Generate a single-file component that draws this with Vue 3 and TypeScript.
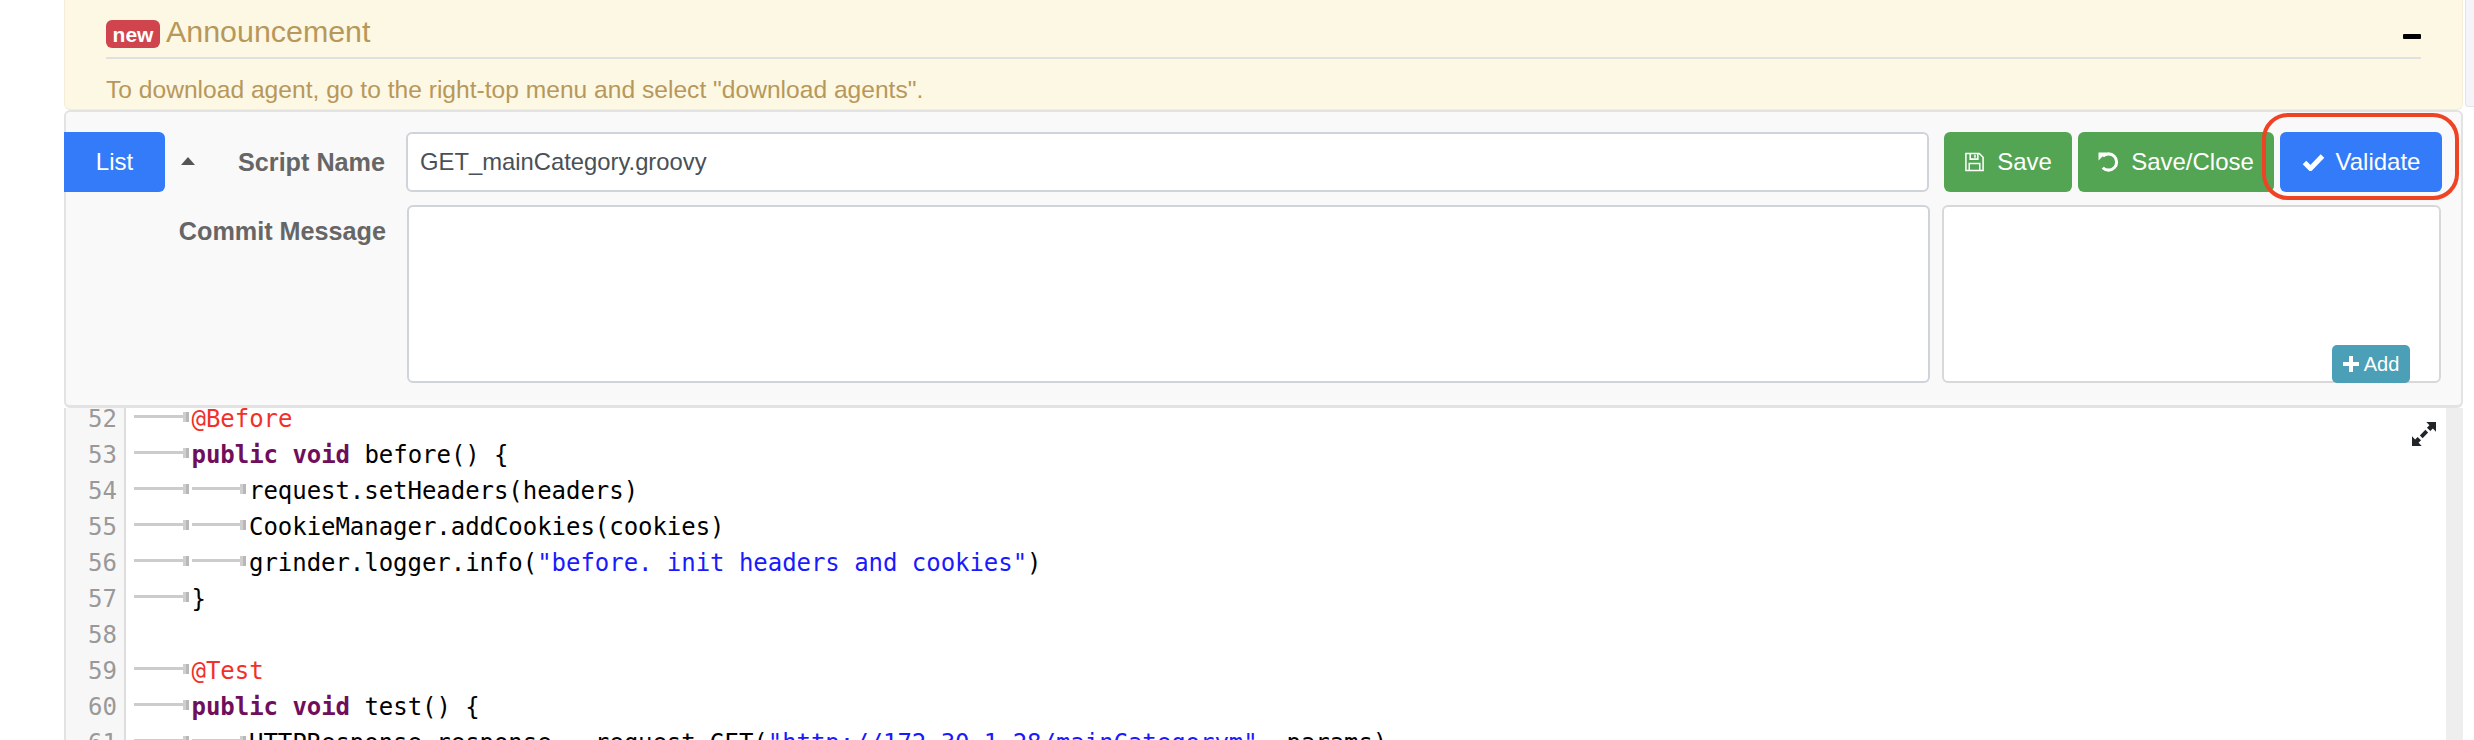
<script setup lang="ts">
type Tok = { t: string; c?: string }
interface Line { n: number; tabs: number; toks: Tok[] }
const lines: Line[] = [
  { n: 52, tabs: 1, toks: [{ t: '@Before', c: 'meta' }] },
  { n: 53, tabs: 1, toks: [{ t: 'public', c: 'kw' }, { t: ' ' }, { t: 'void', c: 'kw' }, { t: ' before() {' }] },
  { n: 54, tabs: 2, toks: [{ t: 'request.setHeaders(headers)' }] },
  { n: 55, tabs: 2, toks: [{ t: 'CookieManager.addCookies(cookies)' }] },
  { n: 56, tabs: 2, toks: [{ t: 'grinder.logger.info(' }, { t: '"before. init headers and cookies"', c: 'str' }, { t: ')' }] },
  { n: 57, tabs: 1, toks: [{ t: '}' }] },
  { n: 58, tabs: 0, toks: [] },
  { n: 59, tabs: 1, toks: [{ t: '@Test', c: 'meta' }] },
  { n: 60, tabs: 1, toks: [{ t: 'public', c: 'kw' }, { t: ' ' }, { t: 'void', c: 'kw' }, { t: ' test() {' }] },
  { n: 61, tabs: 2, toks: [{ t: 'HTTPResponse response = request.GET(' }, { t: '"http://172.30.1.28/mainCategorym"', c: 'str' }, { t: ', params)' }] },
]
</script>

<template>
  <div class="page">
    <div class="edge"></div>
    <section class="alert">
      <div class="alert-head">
        <span class="badge">new</span>
        <span class="alert-title">Announcement</span>
        <span class="minus"></span>
      </div>
      <p class="alert-msg">To download agent, go to the right-top menu and select "download agents".</p>
    </section>

    <section class="panel">
      <div class="row-top">
        <button class="btn blue list">List</button>
        <span class="caret"></span>
        <label class="lbl">Script Name</label>
        <div class="input">GET_mainCategory.groovy</div>
        <div class="actions">
          <button class="btn green save">
            <svg class="ico" viewBox="0 0 22 22" fill="none" stroke="#fff" stroke-width="1.6">
              <path d="M2 2h14l4 4v14H2z" />
              <path d="M6.500 2v6h8V2M11.500 3.500v3" />
              <path d="M5.500 20v-7.500h11V20" />
            </svg>
            Save
          </button>
          <button class="btn green saveclose">
            <svg class="ico" viewBox="0 0 22 22" fill="none" stroke="#fff" stroke-width="3.200">
              <path d="M5 5A8.500 8.500 0 1 1 5 17" />
              <path d="M0.500 1h8.500l-8.500 8.500z" fill="#fff" stroke="none" />
            </svg>
            Save/Close
          </button>
          <button class="btn blue validate">
            <svg class="ico check" viewBox="0 0 22 18" fill="none" stroke="#fff" stroke-width="5">
              <path d="M2 9.500l6 6L20 3" />
            </svg>
            Validate
          </button>
        </div>
      </div>
      <div class="row-bottom">
        <label class="lbl lbl2">Commit Message</label>
        <div class="textarea"></div>
        <div class="tagbox">
          <button class="add">
            <svg class="plus" viewBox="0 0 16 16"><path d="M6 0h4v6h6v4h-6v6H6v-6H0V6h6z" fill="#fff" /></svg>
            Add
          </button>
        </div>
      </div>
      <div class="highlight"></div>
    </section>

    <section class="editor">
      <div class="gutter-bg"></div>
      <div class="scrollbar"></div>
      <svg class="expand" viewBox="0 0 26 26" fill="#212529">
        <path d="M15.500 0H26v10.500l-3.400-3.400-2.700 2.700-3.700-3.700 2.700-2.700z" />
        <path d="M10.500 26H0V15.500l3.400 3.400 2.700-2.700 3.700 3.700-2.700 2.700z" />
        <path d="M8.500 14.500l6-6 3 3-6 6z" />
      </svg>
      <div class="code">
        <div v-for="l in lines" :key="l.n" class="line">
          <span class="num">{{ l.n }}</span>
          <span class="txt">
            <span v-for="i in l.tabs" :key="i" class="tab"></span>
            <span v-for="(k, i) in l.toks" :key="i" :class="k.c">{{ k.t }}</span>
          </span>
        </div>
      </div>
    </section>
  </div>
</template>

<style>
html, body { margin: 0; padding: 0; background: #fff; overflow: hidden; }
</style>

<style scoped>
.page {
  position: relative;
  width: 2474px;
  height: 740px;
  padding: 0 11px 0 64px;
  box-sizing: border-box;
  display: flex;
  flex-direction: column;
  overflow: hidden;
  font-family: "Liberation Sans", Arial, sans-serif;
}
.edge {
  position: absolute;
  left: 2465px;
  top: 0;
  width: 9px;
  height: 107px;
  box-sizing: border-box;
  background: #f5f5f9;
  border-left: 1px solid #e3e3e8;
  border-bottom: 1px solid #e3e3e8;
  border-radius: 0 0 0 4px;
}
.alert {
  height: 110px;
  flex: none;
  box-sizing: border-box;
  background: #fcf8e3;
  border: 1px solid #f5edd8;
  border-top: none;
  border-radius: 0 0 6px 6px;
  padding: 0 41px 0 41px;
  color: #b8975a;
}
.alert-head {
  height: 59px;
  box-sizing: border-box;
  border-bottom: 2px solid #e0e0e0;
  padding-top: 20px;
  display: flex;
  align-items: flex-start;
  position: relative;
}
.badge {
  width: 54px;
  height: 28px;
  border-radius: 6px;
  background: #cf444d;
  color: #fff;
  font-weight: 700;
  font-size: 21px;
  line-height: 29px;
  text-align: center;
}
.alert-title {
  font-size: 30.400px;
  line-height: 22px;
  margin-left: 6px;
}
.minus {
  position: absolute;
  right: 0;
  top: 34px;
  width: 18px;
  height: 5px;
  border-radius: 1px;
  background: #000;
}
.alert-msg {
  margin: 16px 0 0;
  font-size: 24.600px;
  line-height: 30px;
}
.panel {
  position: relative;
  height: 298px;
  flex: none;
  box-sizing: border-box;
  background: #f9f9f9;
  border: 2px solid #e3e3e3;
  border-bottom-width: 3px;
  border-radius: 6px;
  padding-top: 20px;
}
.row-top, .row-bottom {
  display: flex;
  align-items: flex-start;
}
.row-top { height: 60px; }
.row-bottom { margin-top: 13px; height: 178px; }
.btn {
  border: none;
  height: 60px;
  color: #fff;
  font: 24px "Liberation Sans", Arial, sans-serif;
  border-radius: 6px;
  padding: 0;
  display: inline-flex;
  align-items: center;
  justify-content: center;
  flex: none;
}
.blue { background: #337bf8; }
.green { background: #53a553; }
.list { width: 101px; margin-left: -2px; border-radius: 0 6px 6px 0; }
.caret {
  flex: none;
  width: 0;
  height: 0;
  margin: 25px 0 0 16px;
  border-left: 7.500px solid transparent;
  border-right: 7.500px solid transparent;
  border-bottom: 8px solid #555;
}
.lbl {
  flex: none;
  font-weight: 700;
  font-size: 25.200px;
  line-height: 60px;
  color: #666;
  width: 190px;
  text-align: right;
}
.input {
  width: 1523px;
  height: 60px;
  margin-left: 21px;
  box-sizing: border-box;
  background: #fff;
  border: 2px solid #ced4da;
  border-radius: 6px;
  padding-left: 12px;
  font-size: 23.800px;
  line-height: 56px;
  color: #495057;
  flex: none;
}
.actions {
  display: flex;
  gap: 6px;
  margin-left: 15px;
}
.save { width: 128px; }
.saveclose { width: 196px; }
.validate { width: 162px; }
.ico { width: 21px; height: 22px; margin-right: 12px; }
.check { width: 23px; height: 18px; margin-right: 11px; }
.lbl2 {
  width: 320px;
  line-height: 52px;
  margin-right: 21px;
}
.textarea {
  width: 1523px;
  height: 178px;
  box-sizing: border-box;
  background: #fff;
  border: 2px solid #ced4da;
  border-radius: 6px;
  flex: none;
}
.tagbox {
  position: relative;
  width: 499px;
  height: 178px;
  margin-left: 12px;
  box-sizing: border-box;
  background: #fff;
  border: 2px solid #d8d8d8;
  border-radius: 6px;
  flex: none;
}
.add {
  position: absolute;
  right: 29px;
  bottom: -2px;
  width: 78px;
  height: 38px;
  border: none;
  border-radius: 5px;
  background: #4ba0b7;
  color: #fff;
  font: 20px "Liberation Sans", Arial, sans-serif;
  display: flex;
  align-items: center;
  justify-content: center;
  padding: 0;
}
.plus { width: 16px; height: 16px; margin-right: 5px; }
.highlight {
  position: absolute;
  left: 2196px;
  top: 1px;
  width: 197px;
  height: 87px;
  box-sizing: border-box;
  border: 4px solid #ee4425;
  border-radius: 26px;
  pointer-events: none;
}
.editor {
  position: relative;
  flex: 1;
  overflow: hidden;
  background: #fff;
  border-left: 2px solid #e3e3e3;
}
.gutter-bg {
  position: absolute;
  left: 0;
  top: 0;
  bottom: 0;
  width: 58px;
  background: #f7f7f7;
  border-right: 2px solid #ddd;
}
.scrollbar {
  position: absolute;
  right: 0;
  top: 0;
  bottom: 0;
  width: 17px;
  background: #eee;
}
.expand {
  position: absolute;
  right: 27px;
  top: 14px;
  width: 24px;
  height: 24px;
}
.code {
  position: relative;
  margin-top: -7px;
  font-family: "DejaVu Sans Mono", monospace;
  font-size: 24px;
  letter-spacing: -0.040px;
}
.line {
  display: flex;
  height: 36px;
  line-height: 36px;
  white-space: pre;
  color: #000;
}
.num {
  width: 51px;
  flex: none;
  text-align: right;
  color: #999;
  letter-spacing: 0;
}
.txt {
  margin-left: 17px;
}
.tab {
  display: inline-block;
  width: 57.500px;
  height: 36px;
  vertical-align: top;
  position: relative;
}
.tab::before {
  content: "";
  position: absolute;
  left: 0;
  right: 9px;
  top: 14px;
  height: 3px;
  background: #ccc;
}
.tab::after {
  content: "";
  position: absolute;
  right: 3px;
  top: 11px;
  width: 3px;
  height: 10px;
  background: #b8b8b8;
  border-left: 3px solid #cfcfcf;
}
.kw { color: #6f0f5c; font-weight: 700; }
.meta { color: #f2302a; }
.str { color: #1a1aff; }
</style>
